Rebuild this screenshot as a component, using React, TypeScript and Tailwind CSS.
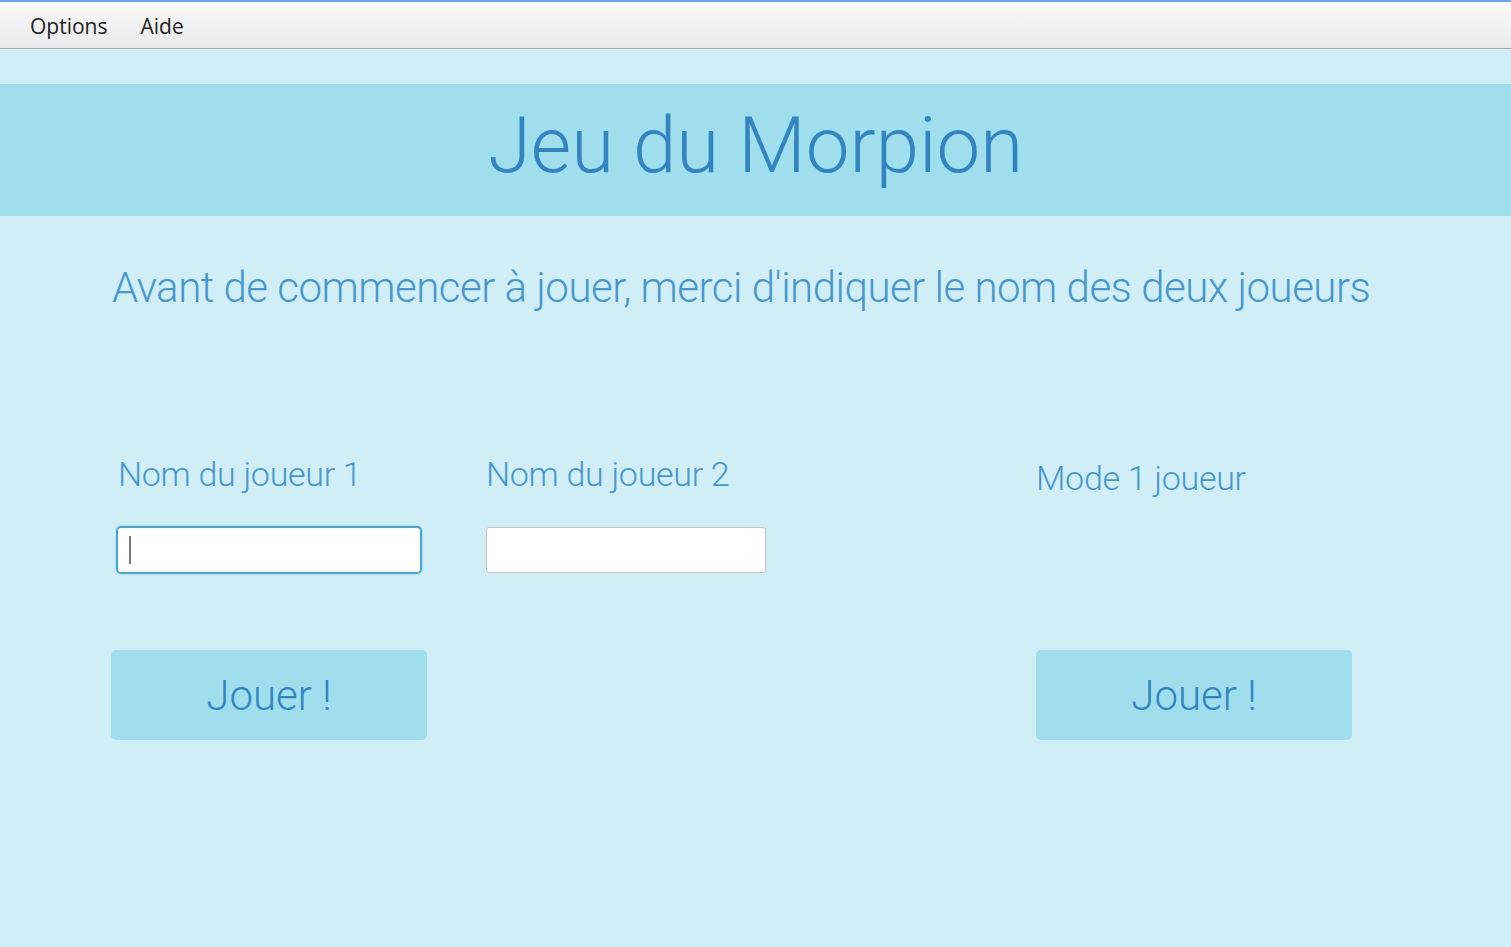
export default function App() {
  return (
    <div className="w-[1511px] h-[947px] bg-[#d1eef6] flex flex-col overflow-hidden" style={{ fontFamily: "Roboto, 'Open Sans', sans-serif" }}>
      <div className="h-[49px] shrink-0 border-t-2 border-t-[#6fa6e6] border-b border-b-[#a9a9a9] bg-gradient-to-b from-[#fbfbfb] to-[#e9e9e9] flex items-center gap-[33px] pl-[30px] pt-[3px] text-[21px] text-[#222]" style={{ fontFamily: "'Open Sans', sans-serif" }}>
        <span>Options</span>
        <span>Aide</span>
      </div>
      <div className="mt-[35px] h-[132px] bg-[#9fdfed] flex items-center justify-center">
        <h1 className="text-[78px] font-light text-[#3584c2] leading-none -mt-[8px]">Jeu du Morpion</h1>
      </div>
      <p className="mt-[46px] pl-[112px] text-[42px] font-light text-[#4598cf] tracking-[-0.5px] leading-[52px]">
        Avant de commencer à jouer, merci d'indiquer le nom des deux joueurs
      </p>
      <div className="mt-[140px] flex pl-[116px]">
        <div className="w-[370px] flex flex-col">
          <label className="text-[34px] font-light text-[#4598cf] tracking-[-0.3px] leading-[40px] pl-[2px]">Nom du joueur 1</label>
          <div className="relative mt-[32px] w-[306px] h-[48px]">
            <input autoFocus className="w-full h-full bg-white rounded-[5px] border-2 border-[#4aa8d8] shadow-[0_0_2px_#7cc4e8] outline-none px-[12px] text-[24px] caret-transparent" />
            <span className="absolute left-[13px] top-[10px] w-[2px] h-[28px] bg-[#777]" />
          </div>
          <button className="mt-[76px] -ml-[5px] w-[316px] h-[90px] rounded-[5px] bg-[#9fdfed] text-[42px] font-light text-[#3584c2]">Jouer !</button>
        </div>
        <div className="w-[550px] flex flex-col">
          <label className="text-[34px] font-light text-[#4598cf] tracking-[-0.3px] leading-[40px]">Nom du joueur 2</label>
          <input className="mt-[33px] w-[280px] h-[46px] bg-white rounded-[3px] border border-[#c4c4c4] outline-none px-[12px] text-[24px]" />
        </div>
        <div className="flex flex-col">
          <label className="mt-[4px] text-[34px] font-light text-[#4598cf] tracking-[-0.3px] leading-[40px]">Mode 1 joueur</label>
          <button className="mt-[152px] w-[316px] h-[90px] rounded-[5px] bg-[#9fdfed] text-[42px] font-light text-[#3584c2]">Jouer !</button>
        </div>
      </div>
    </div>
  );
}
